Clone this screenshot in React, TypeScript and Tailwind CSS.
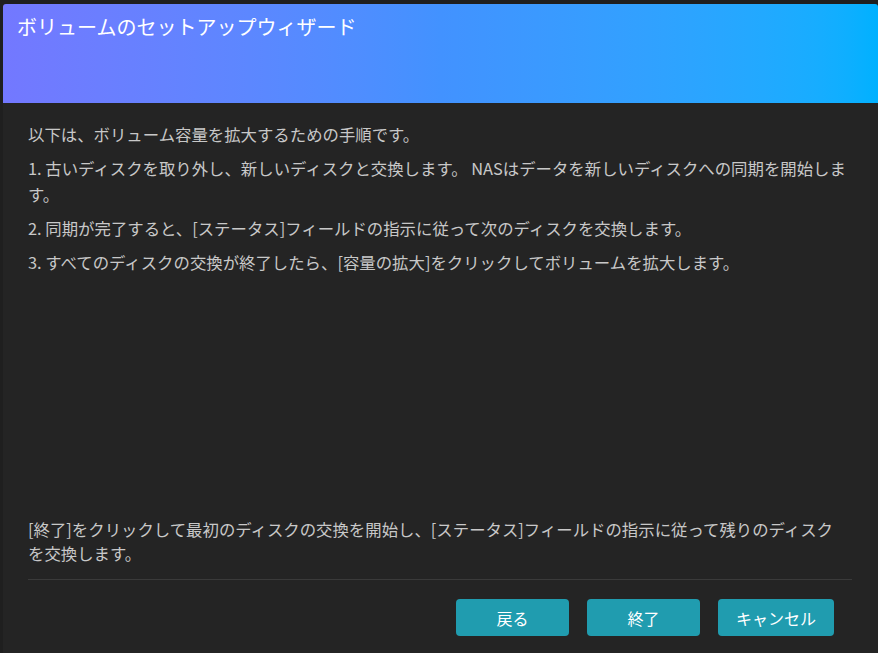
import React from "react";

export default function App() {
  return (
    <div className="w-[878px] h-[653px] bg-[#1f1f1f] pt-[4px] pl-[3px] flex font-['Noto_Sans_CJK_JP','Noto_Sans',sans-serif] overflow-hidden">
      <div className="flex-1 flex flex-col bg-[#242424] rounded-t-[3px] overflow-hidden">
        <div className="h-[99px] shrink-0 bg-linear-to-r from-[#7378ff] via-[#4292ff] to-[#00b1ff] px-[14px] pt-[9px]">
          <h1 className="text-[20px] leading-[28px] text-white">ボリュームのセットアップウィザード</h1>
        </div>
        <div className="flex-1 flex flex-col pl-[25px] pr-[26px] pt-[18px] text-[16.4px] leading-[26px] text-[#c8c8c8]">
          <div className="flex flex-col gap-[8px]">
            <p>以下は、ボリューム容量を拡大するための手順です。</p>
            <p>1. 古いディスクを取り外し、新しいディスクと交換します。 NASはデータを新しいディスクへの同期を開始します。</p>
            <p>2. 同期が完了すると、[ステータス]フィールドの指示に従って次のディスクを交換します。</p>
            <p>3. すべてのディスクの交換が終了したら、[容量の拡大]をクリックしてボリュームを拡大します。</p>
          </div>
          <div className="flex-1" />
          <p className="leading-[24px] pb-[14px] pr-[16px]">[終了]をクリックして最初のディスクの交換を開始し、[ステータス]フィールドの指示に従って残りのディスクを交換します。</p>
          <div className="h-px bg-[#3a3a3a]" />
          <div className="flex justify-end gap-[18px] pr-[18px] pt-[19px] pb-[17px]">
            <button className="w-[113px] h-[37px] rounded-[4px] bg-[#209caf] text-white text-[16px]">戻る</button>
            <button className="w-[113px] h-[37px] rounded-[4px] bg-[#209caf] text-white text-[16px]">終了</button>
            <button className="w-[116px] h-[37px] rounded-[4px] bg-[#209caf] text-white text-[16px]">キャンセル</button>
          </div>
        </div>
      </div>
    </div>
  );
}
